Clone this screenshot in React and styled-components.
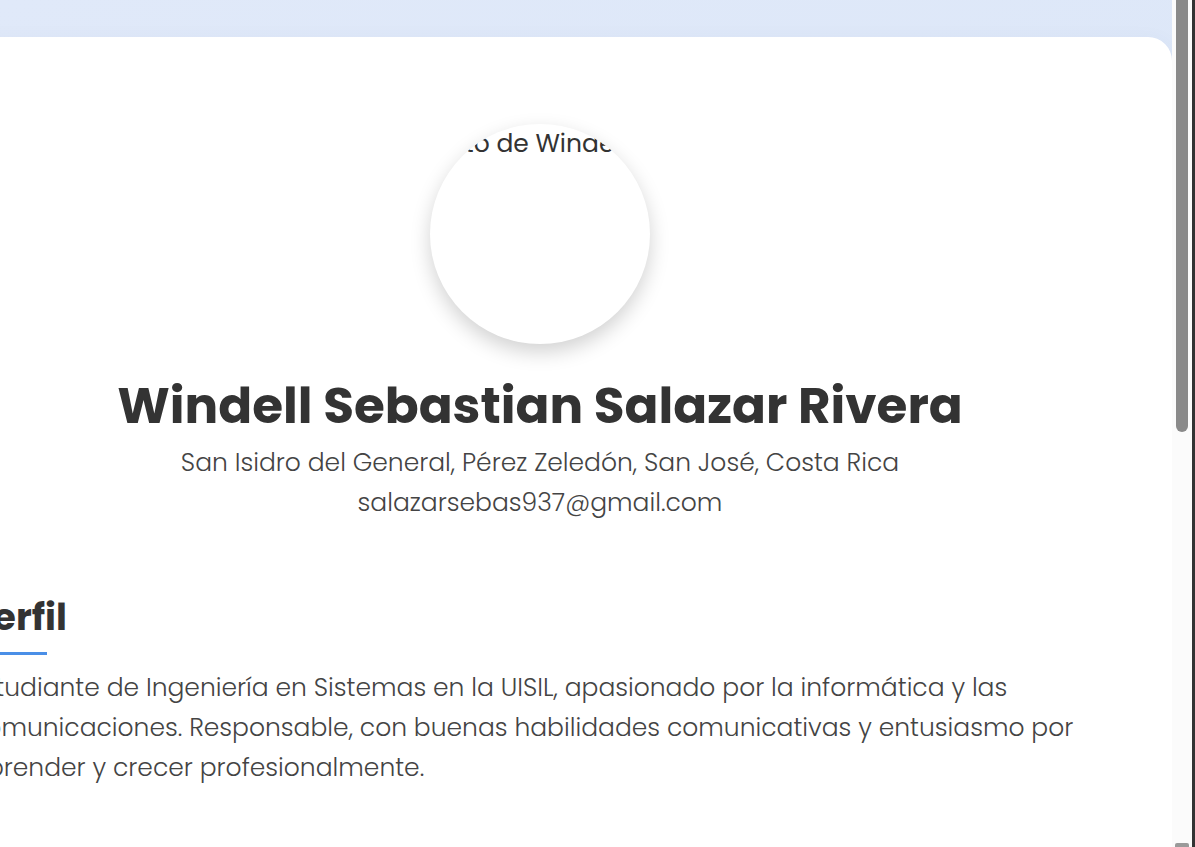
import React from 'react';
import styled, { createGlobalStyle } from 'styled-components';

const FONT = `"Poppins", "Open Sans", "Noto Sans", sans-serif`;

const GlobalStyle = createGlobalStyle`
	html, body {
		margin: 0;
		padding: 0;
		overflow: hidden;
	}
	body {
		font-family: ${FONT};
		color: #333;
	}
	* {
		box-sizing: border-box;
	}
`;

const profile = {
	name: 'Windell Sebastian Salazar Rivera',
	location: 'San Isidro del General, Pérez Zeledón, San José, Costa Rica',
	email: 'salazarsebas937@gmail.com',
	summary:
		'Estudiante de Ingeniería en Sistemas en la UISIL, apasionado por la informática y las comunicaciones. Responsable, con buenas habilidades comunicativas y entusiasmo por aprender y crecer profesionalmente.',
};

const App = () => {
	return (
		<>
			<GlobalStyle />
			<Frame>
				<Viewport>
					<Card>
						<Header>
							<Photo>
								<AltText>Foto de {profile.name}</AltText>
							</Photo>
							<Name>{profile.name}</Name>
							<Contact>{profile.location}</Contact>
							<Contact>{profile.email}</Contact>
						</Header>

						<Section>
							<SectionTitle>Perfil</SectionTitle>
							<Paragraph>{profile.summary}</Paragraph>
						</Section>
					</Card>
				</Viewport>

				<ScrollTrack>
					<ScrollRail>
						<ScrollThumb />
						<ScrollStub />
					</ScrollRail>
					<ScrollEdge />
				</ScrollTrack>
			</Frame>
		</>
	);
};

const Frame = styled.div`
	display: flex;
	width: 1195px;
	height: 847px;
	overflow: hidden;
`;

const Viewport = styled.main`
	flex: 0 0 1172px;
	height: 100%;
	overflow: hidden;
	display: flex;
	justify-content: flex-end;
	align-items: flex-start;
	padding-top: 37px;
	background: linear-gradient(160deg, #e0e9f9 0%, #d9e5f7 100%);
`;

const Card = styled.div`
	flex: 0 0 1264px;
	min-height: 1000px;
	background: #fff;
	border-radius: 24px;
	padding: 87px 62px 60px;
	box-shadow: 0 4px 20px rgba(60, 90, 140, 0.06);
`;

const Header = styled.header`
	display: flex;
	flex-direction: column;
	align-items: center;
	text-align: center;
`;

const Photo = styled.div`
	width: 220px;
	height: 220px;
	border-radius: 50%;
	overflow: hidden;
	background: #fff;
	box-shadow: 0 8px 20px rgba(0, 0, 0, 0.18);
	text-align: left;
`;

const AltText = styled.span`
	display: block;
	padding-left: 6px;
	white-space: nowrap;
	font-size: 25px;
	line-height: 40px;
	color: #333;
`;

const Name = styled.h1`
	margin: 32px 0 7px;
	font-size: 50px;
	line-height: 60px;
	font-weight: 700;
	color: #333;
`;

const Contact = styled.p`
	margin: 0;
	font-size: 25px;
	line-height: 40px;
	font-weight: 300;
	color: #444;
`;

const Section = styled.section`
	margin-top: 73px;
`;

const SectionTitle = styled.h2`
	position: relative;
	margin: 0 0 13px;
	padding-bottom: 17px;
	font-size: 37px;
	line-height: 42px;
	font-weight: 700;
	color: #333;

	&::after {
		content: '';
		position: absolute;
		left: 0;
		bottom: 0;
		width: 77px;
		height: 3px;
		background: #4a8fe7;
	}
`;

const Paragraph = styled.p`
	margin: 0;
	font-size: 25px;
	line-height: 40px;
	font-weight: 300;
	color: #444;
`;

const ScrollTrack = styled.div`
	flex: 0 0 23px;
	display: flex;
	gap: 4px;
	padding-left: 4px;
	background: #fbfbfb;
`;

const ScrollRail = styled.div`
	width: 12px;
	display: flex;
	flex-direction: column;
	justify-content: space-between;
`;

const ScrollThumb = styled.div`
	height: 432px;
	background: #8a8a8a;
	border-radius: 0 0 6px 6px;
`;

const ScrollStub = styled.div`
	height: 4px;
	margin-left: -1px;
	width: 14px;
	background: #9a9a9a;
	border-radius: 2px 2px 0 0;
`;

const ScrollEdge = styled.div`
	flex: 1;
	background: #333;
`;

export default App;
